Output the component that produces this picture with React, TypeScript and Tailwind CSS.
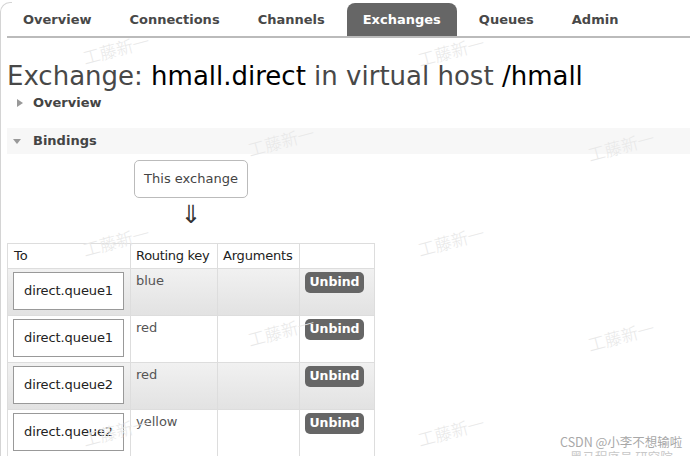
import React from 'react'

const tabs = ['Overview', 'Connections', 'Channels', 'Exchanges', 'Queues', 'Admin']

const bindings = [
  { to: 'direct.queue1', key: 'blue' },
  { to: 'direct.queue1', key: 'red' },
  { to: 'direct.queue2', key: 'red' },
  { to: 'direct.queue2', key: 'yellow' },
]

// faint "工藤新一" marks laid over the page
const marks = [
  { x: 82, y: 40 },
  { x: 247, y: 132 },
  { x: 82, y: 232 },
  { x: 247, y: 322 },
  { x: 82, y: 422 },
  { x: 417, y: 42 },
  { x: 587, y: 137 },
  { x: 417, y: 232 },
  { x: 587, y: 327 },
  { x: 417, y: 422 },
]

function Watermark({ x, y }: { x: number; y: number }) {
  return (
    <div
      className="pointer-events-none absolute -rotate-[15deg] text-[17px] leading-none text-[#e8e8e8] font-['Noto_Sans_CJK_SC',sans-serif] font-light"
      style={{ left: x, top: y }}
    >
      工藤新一
    </div>
  )
}

export default function App() {
  return (
    <div className="relative h-[456px] w-[690px] overflow-hidden bg-white font-['DejaVu_Sans',Verdana,sans-serif] text-[13px] text-[#444]">
      <div className="absolute left-0 top-[2px] h-[460px] w-[12px] rounded-tl-[10px] border-l border-t border-[#d4d4d4]" />

      <div className="relative pl-[7px]">
        {/* tabs */}
        <ul className="flex gap-[6px] border-b-2 border-[#bbb] pt-[3px]">
          {tabs.map((t) => (
            <li
              key={t}
              className={
                t === 'Exchanges'
                  ? 'h-[33px] rounded-t-[8px] bg-[#666] px-[16px] font-bold leading-[33px] text-white'
                  : 'h-[33px] px-[16px] font-bold leading-[33px] text-[#484848]'
              }
            >
              {t}
            </li>
          ))}
        </ul>

        <h1 className="mt-[24px] whitespace-nowrap text-[26px] leading-[28px] text-[#484848]">
          Exchange: <span className="text-black">hmall.direct</span> in virtual host{' '}
          <span className="text-black">/hmall</span>
        </h1>

        {/* Overview section */}
        <div className="flex h-[26px] items-center font-bold">
          <span className="ml-[10px] mr-[10px] h-0 w-0 border-y-[4.5px] border-l-[6px] border-y-transparent border-l-[#999]" />
          <span>Overview</span>
        </div>

        {/* Bindings section */}
        <div className="mt-[12px] flex h-[26px] items-center bg-[#f7f7f7] font-bold">
          <span className="ml-[6px] mr-[12px] h-0 w-0 border-x-[4px] border-t-[5px] border-x-transparent border-t-[#999]" />
          <span>Bindings</span>
        </div>

        <div className="inline-flex flex-col items-center">
          <div className="mt-[6px] flex h-[38px] w-[114px] items-center justify-center rounded-[5px] border border-[#bbb] text-[#444]">
            This exchange
          </div>
          <div className="mt-[3px] h-[28px] text-[25px] leading-[28px] text-[#333]">⇓</div>
          <table className="mt-[14px] table-fixed border-collapse whitespace-nowrap text-left">
            <thead>
              <tr className="h-[25px]">
                <th className="w-[123px] border border-[#ddd] px-[6px] font-normal text-[#222]">To</th>
                <th className="w-[87px] border border-[#ddd] px-[5px] font-normal tracking-[-0.3px] text-[#222]">Routing key</th>
                <th className="w-[82px] border border-[#ddd] px-[5px] font-normal tracking-[-0.2px] text-[#222]">Arguments</th>
                <th className="w-[75px] border border-[#ddd] px-[6px]" />
              </tr>
            </thead>
            <tbody>
              {bindings.map((b, i) => (
                <tr
                  key={i}
                  className={i % 2 === 0 ? 'h-[47px] bg-linear-to-b from-[#f1f1f1] to-[#e2e2e2]' : 'h-[47px] bg-white'}
                >
                  <td className="border border-[#ddd] px-[5px] py-[3px] align-top">
                    <div className="flex h-[38px] w-[111px] items-center justify-center border border-[#999] bg-white tracking-[-0.1px] text-[#222]">
                      {b.to}
                    </div>
                  </td>
                  <td className="border border-[#ddd] px-[5px] pt-[2px] align-top text-[#555]">{b.key}</td>
                  <td className="border border-[#ddd]" />
                  <td className="border border-[#ddd] px-[5px] pt-[3px] align-top">
                    <div className="flex h-[21px] w-[59px] items-center justify-center rounded-[5px] bg-[#666] text-[12.5px] font-bold text-white">
                      Unbind
                    </div>
                  </td>
                </tr>
              ))}
            </tbody>
          </table>
        </div>
      </div>

      {marks.map((m, i) => (
        <Watermark key={i} x={m.x} y={m.y} />
      ))}

      <div className="pointer-events-none absolute left-[560px] top-[434px] whitespace-nowrap font-['Noto_Sans_CJK_SC',sans-serif] text-[12.5px] leading-[15px] text-[#a8a8a8]">
        <div>CSDN @小李不想输啦</div>
        <div className="pl-[10px] text-[#c8c8c8]">黑马程序员 研究院</div>
      </div>
    </div>
  )
}
